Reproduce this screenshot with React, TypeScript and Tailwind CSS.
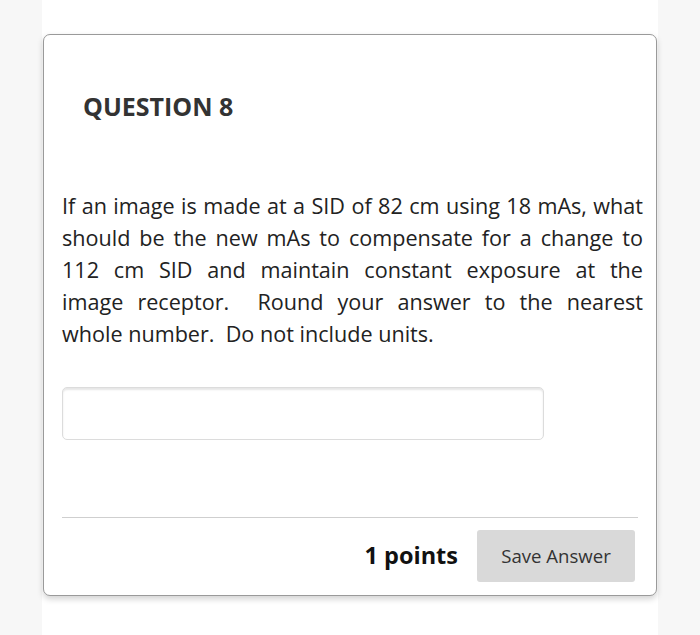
import React from 'react';

const lines = [
  'If an image is made at a SID of 82 cm using 18 mAs, what',
  'should be the new mAs to compensate for a change to',
  '112 cm SID and maintain constant exposure at the',
  'image receptor.\u00a0 Round your answer to the nearest',
];

const QuestionCard: React.FC = () => {
  return (
    <div className="ml-px w-[614px] rounded-[7px] border-[1.5px] border-[#9a9a9a] bg-white shadow-[0_3px_6px_rgba(0,0,0,0.18)]">
      <div className="pl-[18px] pr-[13px] pt-[55px] pb-[13px]">
        <h2 className="pl-[21px] text-[25px] font-bold leading-[32px] text-[#333]">QUESTION 8</h2>
        <div className="mt-[68px] text-[21.6px] leading-[32px] text-[#222]">
          {lines.map((line) => (
            <p key={line} className="text-justify [text-align-last:justify]">
              {line}
            </p>
          ))}
          <p>whole number.&nbsp; Do not include units.</p>
        </div>
        <input
          type="text"
          className="mt-[37px] block h-[53px] w-[482px] rounded-[5px] border border-[#dcdcdc] bg-white shadow-[inset_0_2px_2px_rgba(0,0,0,0.1)] outline-none"
        />
        <div className="mt-[77px] mr-[5px] border-t border-[#cfcfcf]" />
        <div className="mt-[12px] flex items-center justify-end gap-[19px] pr-[8px]">
          <span className="text-[23.5px] font-bold text-[#111]">1 points</span>
          <button className="h-[52px] w-[158px] rounded-[3px] bg-[#d9d9d9] text-[18.6px] text-[#333]">Save Answer</button>
        </div>
      </div>
    </div>
  );
};

export default function App() {
  return (
    <div className="h-[635px] w-[700px] bg-[#f7f7f7] font-['Open_Sans',sans-serif]">
      <div className="ml-[42px] h-full w-[616px] bg-white pt-[34px]">
        <QuestionCard />
      </div>
    </div>
  );
}
